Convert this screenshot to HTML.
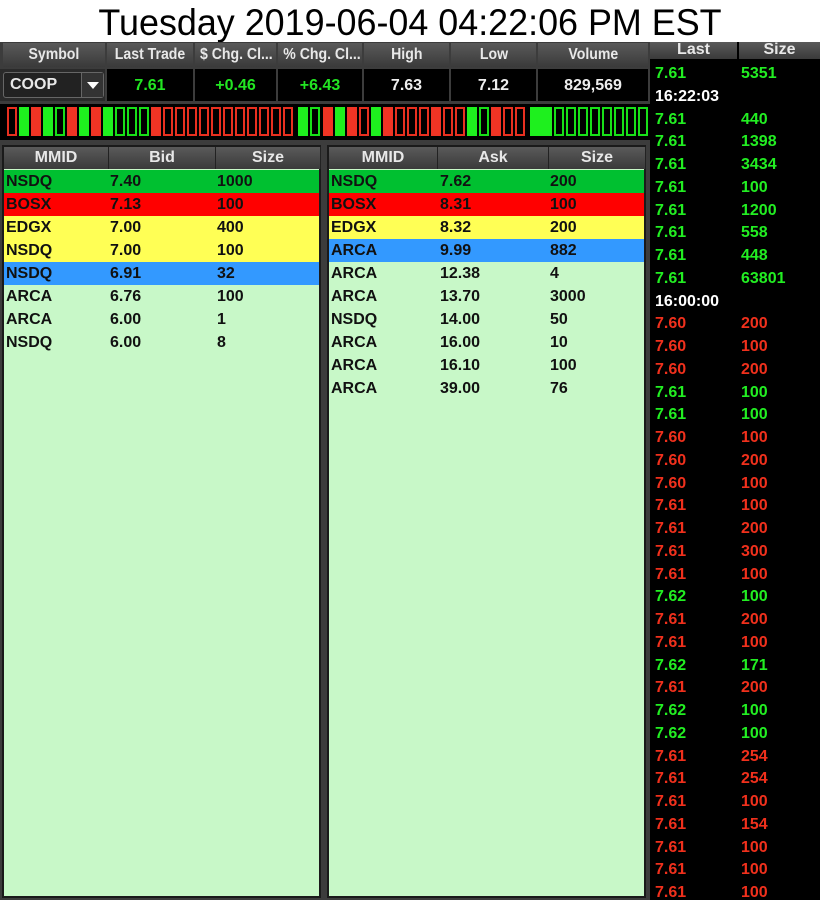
<!DOCTYPE html>
<html><head><meta charset="utf-8"><style>
*{margin:0;padding:0;box-sizing:border-box}
body{width:820px;height:900px;overflow:hidden;background:#fff;position:relative;font-family:"Liberation Sans",sans-serif}
.title{position:absolute;left:0;top:2px;width:820px;text-align:center;font-size:37px;color:#000;transform:scaleX(0.97);transform-origin:410px 0;line-height:42px}
.frame{position:absolute;left:0;top:42px;width:820px;height:858px;background:#3c3c3c}
.hc{position:absolute;top:43px;height:24px;background:linear-gradient(#5a5a5a,#3a3a3a);color:#e8e8e8;font-size:16px;font-weight:bold;text-align:center;line-height:24px;white-space:nowrap;overflow:hidden}
.hc span{display:inline-block;transform:scaleX(.88)}
.vc{position:absolute;top:69px;height:32px;background:#000;color:#22e622;font-size:16px;font-weight:bold;text-align:center;line-height:34px}
.bars{position:absolute;left:0;top:104px;width:650px;height:36px;background:#000}
.b{position:absolute;top:3px;width:10px;height:29px}
.Rf{background:#f03424}.Gf{background:#1ef01e}.Ro{border:2px solid #e83020}.Go{border:2px solid #18e018}
.book{position:absolute;top:145px;height:753px;background:#c8f8c8;border:2px solid #1a1a1a}
.bh{position:absolute;top:0;height:22px;background:linear-gradient(#5a5a5a,#3a3a3a);color:#e8e8e8;font-weight:bold;font-size:16px;text-align:center;line-height:22px;border-right:1px solid #222}
.row{position:absolute;left:0;width:100%;height:23px;font-size:16px;font-weight:bold;line-height:23px;color:#111}
.row span{position:absolute}
.ts{position:absolute;left:650px;top:42px;width:170px;height:858px;background:#000}
.th{position:absolute;top:0;height:17px;background:linear-gradient(#5a5a5a,#3a3a3a);color:#e8e8e8;font-size:16px;font-weight:bold;text-align:center;line-height:16px}
.t{position:absolute;left:0;width:170px;height:22px;font-size:16px;font-weight:bold;line-height:22px;margin-top:2px}
.t span{position:absolute}
.g{color:#22ee22}.r{color:#f0301c}.w{color:#fff}
</style></head><body>
<div class="title">Tuesday 2019-06-04 04:22:06 PM EST</div>
<div class="frame"></div>
<div class="hc" style="left:3px;width:102px"><span>Symbol</span></div>
<div class="hc" style="left:107px;width:86px"><span>Last Trade</span></div>
<div class="hc" style="left:195px;width:81px"><span>$ Chg. Cl...</span></div>
<div class="hc" style="left:278px;width:84px"><span>% Chg. Cl...</span></div>
<div class="hc" style="left:364px;width:85px"><span>High</span></div>
<div class="hc" style="left:451px;width:85px"><span>Low</span></div>
<div class="hc" style="left:538px;width:110px"><span>Volume</span></div>
<div class="vc" style="left:0;width:105px;background:#2a2a2a"></div>
<div style="position:absolute;left:3px;top:72px;width:101px;height:26px;background:#222;border:1px solid #666;border-radius:3px;color:#e8e8e8;font-size:16px;font-weight:bold;line-height:24px;padding-left:6px">COOP<div style="position:absolute;right:0;top:0;width:22px;height:24px;border-left:1px solid #666;background:#333"><div style="position:absolute;left:5px;top:9px;width:0;height:0;border-left:6px solid transparent;border-right:6px solid transparent;border-top:7px solid #fff"></div></div></div>
<div class="vc" style="left:107px;width:86px">7.61</div>
<div class="vc" style="left:195px;width:81px">+0.46</div>
<div class="vc" style="left:278px;width:84px">+6.43</div>
<div class="vc" style="left:364px;width:85px;color:#eee">7.63</div>
<div class="vc" style="left:451px;width:85px;color:#eee">7.12</div>
<div class="vc" style="left:538px;width:110px;color:#eee">829,569</div>
<div class="bars">
<div class="b Ro" style="left:7px"></div><div class="b Gf" style="left:19px"></div><div class="b Rf" style="left:31px"></div><div class="b Gf" style="left:43px"></div><div class="b Go" style="left:55px"></div><div class="b Rf" style="left:67px"></div><div class="b Gf" style="left:79px"></div><div class="b Rf" style="left:91px"></div><div class="b Gf" style="left:103px"></div><div class="b Go" style="left:115px"></div><div class="b Go" style="left:127px"></div><div class="b Go" style="left:139px"></div><div class="b Rf" style="left:151px"></div>
<div class="b Ro" style="left:163px"></div><div class="b Ro" style="left:175px"></div><div class="b Ro" style="left:187px"></div><div class="b Ro" style="left:199px"></div><div class="b Ro" style="left:211px"></div><div class="b Ro" style="left:223px"></div><div class="b Ro" style="left:235px"></div><div class="b Ro" style="left:247px"></div><div class="b Ro" style="left:259px"></div><div class="b Ro" style="left:271px"></div><div class="b Ro" style="left:283px"></div>
<div class="b Gf" style="left:298px"></div><div class="b Go" style="left:310px"></div><div class="b Rf" style="left:323px"></div><div class="b Gf" style="left:335px"></div><div class="b Rf" style="left:347px"></div><div class="b Ro" style="left:359px"></div><div class="b Gf" style="left:371px"></div><div class="b Rf" style="left:383px"></div><div class="b Ro" style="left:395px"></div><div class="b Ro" style="left:407px"></div><div class="b Ro" style="left:419px"></div><div class="b Rf" style="left:431px"></div><div class="b Ro" style="left:443px"></div><div class="b Ro" style="left:455px"></div><div class="b Gf" style="left:467px"></div><div class="b Go" style="left:479px"></div><div class="b Rf" style="left:491px"></div><div class="b Ro" style="left:503px"></div><div class="b Ro" style="left:515px"></div>
<div class="b Gf" style="left:530px;width:22px"></div>
<div class="b Go" style="left:554px"></div><div class="b Go" style="left:566px"></div><div class="b Go" style="left:578px"></div><div class="b Go" style="left:590px"></div><div class="b Go" style="left:602px"></div><div class="b Go" style="left:614px"></div><div class="b Go" style="left:626px"></div><div class="b Go" style="left:638px"></div>
</div>

<div class="book" style="left:2px;width:319px">
<div class="bh" style="left:0;width:105px">MMID</div><div class="bh" style="left:105px;width:107px">Bid</div><div class="bh" style="left:212px;width:105px">Size</div>
<div class="row" style="top:23px;background:#00c030"><span style="left:2px">NSDQ</span><span style="left:106px">7.40</span><span style="left:213px">1000</span></div>
<div class="row" style="top:46px;background:#ff0000"><span style="left:2px">BOSX</span><span style="left:106px">7.13</span><span style="left:213px">100</span></div>
<div class="row" style="top:69px;background:#ffff55"><span style="left:2px">EDGX</span><span style="left:106px">7.00</span><span style="left:213px">400</span></div>
<div class="row" style="top:92px;background:#ffff55"><span style="left:2px">NSDQ</span><span style="left:106px">7.00</span><span style="left:213px">100</span></div>
<div class="row" style="top:115px;background:#3399ff"><span style="left:2px">NSDQ</span><span style="left:106px">6.91</span><span style="left:213px">32</span></div>
<div class="row" style="top:138px"><span style="left:2px">ARCA</span><span style="left:106px">6.76</span><span style="left:213px">100</span></div>
<div class="row" style="top:161px"><span style="left:2px">ARCA</span><span style="left:106px">6.00</span><span style="left:213px">1</span></div>
<div class="row" style="top:184px"><span style="left:2px">NSDQ</span><span style="left:106px">6.00</span><span style="left:213px">8</span></div>
</div>

<div class="book" style="left:327px;width:319px">
<div class="bh" style="left:0;width:109px">MMID</div><div class="bh" style="left:109px;width:111px">Ask</div><div class="bh" style="left:220px;width:97px">Size</div>
<div class="row" style="top:23px;background:#00c030"><span style="left:2px">NSDQ</span><span style="left:111px">7.62</span><span style="left:221px">200</span></div>
<div class="row" style="top:46px;background:#ff0000"><span style="left:2px">BOSX</span><span style="left:111px">8.31</span><span style="left:221px">100</span></div>
<div class="row" style="top:69px;background:#ffff55"><span style="left:2px">EDGX</span><span style="left:111px">8.32</span><span style="left:221px">200</span></div>
<div class="row" style="top:92px;background:#3399ff"><span style="left:2px">ARCA</span><span style="left:111px">9.99</span><span style="left:221px">882</span></div>
<div class="row" style="top:115px"><span style="left:2px">ARCA</span><span style="left:111px">12.38</span><span style="left:221px">4</span></div>
<div class="row" style="top:138px"><span style="left:2px">ARCA</span><span style="left:111px">13.70</span><span style="left:221px">3000</span></div>
<div class="row" style="top:161px"><span style="left:2px">NSDQ</span><span style="left:111px">14.00</span><span style="left:221px">50</span></div>
<div class="row" style="top:184px"><span style="left:2px">ARCA</span><span style="left:111px">16.00</span><span style="left:221px">10</span></div>
<div class="row" style="top:207px"><span style="left:2px">ARCA</span><span style="left:111px">16.10</span><span style="left:221px">100</span></div>
<div class="row" style="top:230px"><span style="left:2px">ARCA</span><span style="left:111px">39.00</span><span style="left:221px">76</span></div>
</div>

<div class="ts">
<div class="th" style="left:0;width:87px">Last</div><div class="th" style="left:89px;width:81px">Size</div>
<div class="t g" style="top:19px"><span style="left:5px">7.61</span><span style="left:91px">5351</span></div>
<div class="t w" style="top:42px"><span style="left:5px">16:22:03</span></div>
<div class="t g" style="top:65px"><span style="left:5px">7.61</span><span style="left:91px">440</span></div>
<div class="t g" style="top:87px"><span style="left:5px">7.61</span><span style="left:91px">1398</span></div>
<div class="t g" style="top:110px"><span style="left:5px">7.61</span><span style="left:91px">3434</span></div>
<div class="t g" style="top:133px"><span style="left:5px">7.61</span><span style="left:91px">100</span></div>
<div class="t g" style="top:156px"><span style="left:5px">7.61</span><span style="left:91px">1200</span></div>
<div class="t g" style="top:178px"><span style="left:5px">7.61</span><span style="left:91px">558</span></div>
<div class="t g" style="top:201px"><span style="left:5px">7.61</span><span style="left:91px">448</span></div>
<div class="t g" style="top:224px"><span style="left:5px">7.61</span><span style="left:91px">63801</span></div>
<div class="t w" style="top:247px"><span style="left:5px">16:00:00</span></div>
<div class="t r" style="top:269px"><span style="left:5px">7.60</span><span style="left:91px">200</span></div>
<div class="t r" style="top:292px"><span style="left:5px">7.60</span><span style="left:91px">100</span></div>
<div class="t r" style="top:315px"><span style="left:5px">7.60</span><span style="left:91px">200</span></div>
<div class="t g" style="top:338px"><span style="left:5px">7.61</span><span style="left:91px">100</span></div>
<div class="t g" style="top:360px"><span style="left:5px">7.61</span><span style="left:91px">100</span></div>
<div class="t r" style="top:383px"><span style="left:5px">7.60</span><span style="left:91px">100</span></div>
<div class="t r" style="top:406px"><span style="left:5px">7.60</span><span style="left:91px">200</span></div>
<div class="t r" style="top:429px"><span style="left:5px">7.60</span><span style="left:91px">100</span></div>
<div class="t r" style="top:451px"><span style="left:5px">7.61</span><span style="left:91px">100</span></div>
<div class="t r" style="top:474px"><span style="left:5px">7.61</span><span style="left:91px">200</span></div>
<div class="t r" style="top:497px"><span style="left:5px">7.61</span><span style="left:91px">300</span></div>
<div class="t r" style="top:520px"><span style="left:5px">7.61</span><span style="left:91px">100</span></div>
<div class="t g" style="top:542px"><span style="left:5px">7.62</span><span style="left:91px">100</span></div>
<div class="t r" style="top:565px"><span style="left:5px">7.61</span><span style="left:91px">200</span></div>
<div class="t r" style="top:588px"><span style="left:5px">7.61</span><span style="left:91px">100</span></div>
<div class="t g" style="top:611px"><span style="left:5px">7.62</span><span style="left:91px">171</span></div>
<div class="t r" style="top:633px"><span style="left:5px">7.61</span><span style="left:91px">200</span></div>
<div class="t g" style="top:656px"><span style="left:5px">7.62</span><span style="left:91px">100</span></div>
<div class="t g" style="top:679px"><span style="left:5px">7.62</span><span style="left:91px">100</span></div>
<div class="t r" style="top:702px"><span style="left:5px">7.61</span><span style="left:91px">254</span></div>
<div class="t r" style="top:724px"><span style="left:5px">7.61</span><span style="left:91px">254</span></div>
<div class="t r" style="top:747px"><span style="left:5px">7.61</span><span style="left:91px">100</span></div>
<div class="t r" style="top:770px"><span style="left:5px">7.61</span><span style="left:91px">154</span></div>
<div class="t r" style="top:793px"><span style="left:5px">7.61</span><span style="left:91px">100</span></div>
<div class="t r" style="top:815px"><span style="left:5px">7.61</span><span style="left:91px">100</span></div>
<div class="t r" style="top:838px"><span style="left:5px">7.61</span><span style="left:91px">100</span></div>
</div>
</body></html>
